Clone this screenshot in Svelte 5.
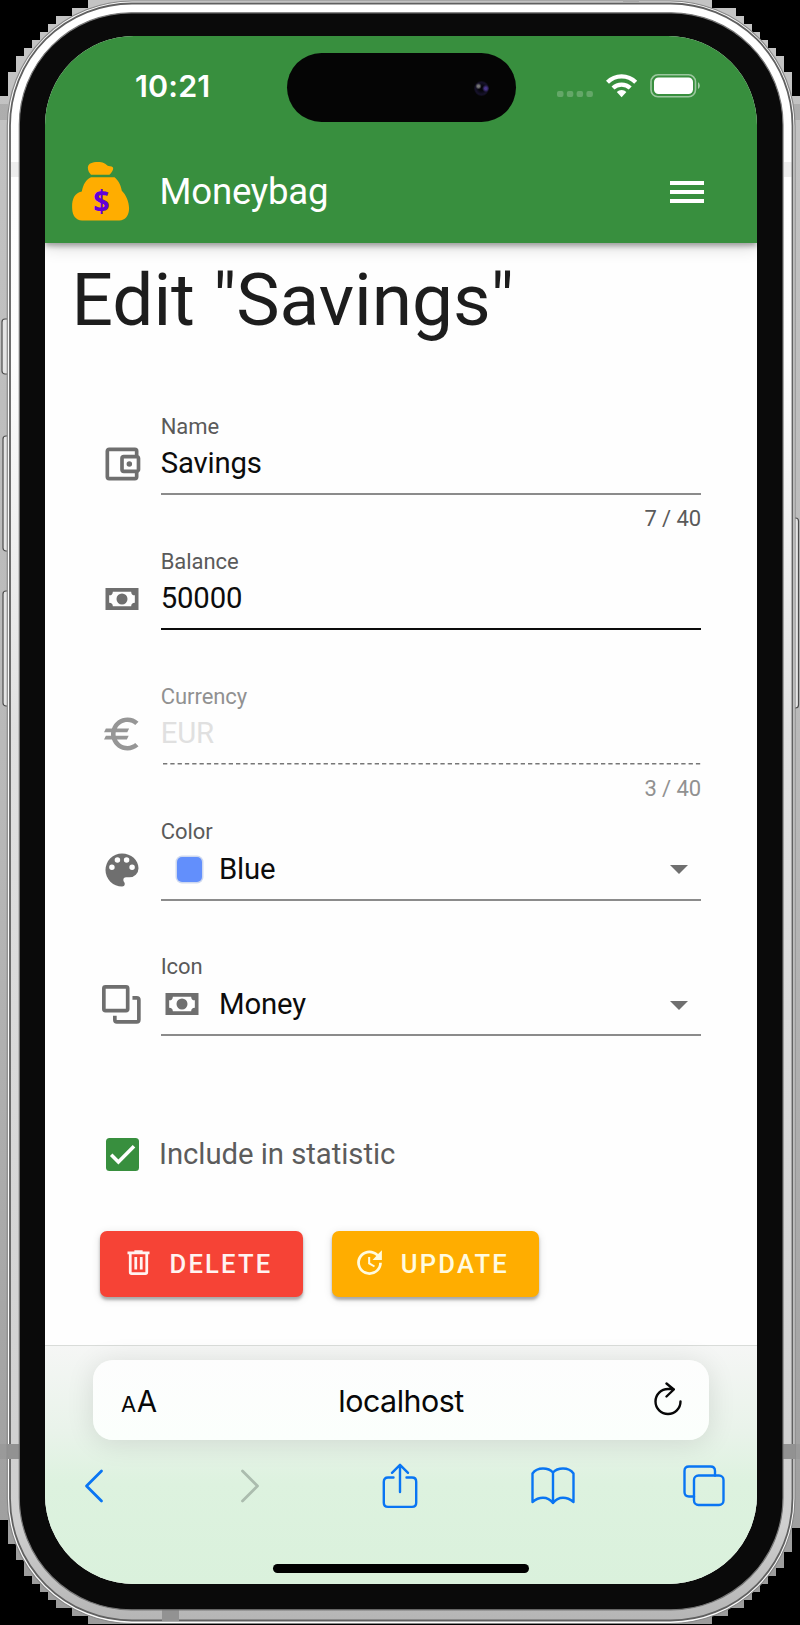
<script>
  const cash = 'M3,6H21V18H3V6M12,9A3,3 0 0,1 15,12A3,3 0 0,1 12,15A3,3 0 0,1 9,12A3,3 0 0,1 12,9M7,8A2,2 0 0,1 5,10V14A2,2 0 0,1 7,16H17A2,2 0 0,1 19,14V10A2,2 0 0,1 17,8H7Z';
  const fields = [
    { label: 'Name', value: 'Savings', helper: '7 / 40', icon: 'M5,3C3.89,3 3,3.9 3,5V19A2,2 0 0,0 5,21H19A2,2 0 0,0 21,19V16.72C21.59,16.37 22,15.74 22,15V9C22,8.26 21.59,7.63 21,7.28V5A2,2 0 0,0 19,3H5M5,5H19V7H13A2,2 0 0,0 11,9V15A2,2 0 0,0 13,17H19V19H5V5M13,9H20V15H13V9M16,10.5A1.5,1.5 0 0,0 14.5,12A1.5,1.5 0 0,0 16,13.5A1.5,1.5 0 0,0 17.5,12A1.5,1.5 0 0,0 16,10.5Z' },
    { label: 'Balance', value: '50000', state: 'hovered', icon: cash },
    { label: 'Currency', value: 'EUR', helper: '3 / 40', state: 'disabled', icon: 'M15 18.5c-2.51 0-4.68-1.42-5.76-3.5h5.4l1-2H8.58c-.05-.33-.08-.66-.08-1s.03-.67.08-1h6.3l1-2H9.24C10.32 6.92 12.5 5.5 15 5.5c1.61 0 3.09.59 4.23 1.57L21 5.3C19.41 3.87 17.3 3 15 3c-3.92 0-7.24 2.51-8.48 6H3.2l-1 2h3.86c-.04.33-.06.66-.06 1s.02.67.06 1H3.2l-1 2h4.32c1.24 3.49 4.56 6 8.48 6 2.31 0 4.41-.87 6-2.3l-1.78-1.77c-1.13.98-2.6 1.57-4.22 1.57z' },
    { label: 'Color', value: 'Blue', select: 'swatch', icon: 'M17.5,12A1.5,1.5 0 0,1 16,10.5A1.5,1.5 0 0,1 17.5,9A1.5,1.5 0 0,1 19,10.5A1.5,1.5 0 0,1 17.5,12M14.5,8A1.5,1.5 0 0,1 13,6.5A1.5,1.5 0 0,1 14.5,5A1.5,1.5 0 0,1 16,6.5A1.5,1.5 0 0,1 14.5,8M9.5,8A1.5,1.5 0 0,1 8,6.5A1.5,1.5 0 0,1 9.5,5A1.5,1.5 0 0,1 11,6.5A1.5,1.5 0 0,1 9.5,8M6.5,12A1.5,1.5 0 0,1 5,10.5A1.5,1.5 0 0,1 6.5,9A1.5,1.5 0 0,1 8,10.5A1.5,1.5 0 0,1 6.5,12M12,3A9,9 0 0,0 3,12A9,9 0 0,0 12,21A1.5,1.5 0 0,0 13.5,19.5C13.5,19.11 13.35,18.76 13.11,18.5C12.88,18.23 12.73,17.88 12.73,17.5A1.5,1.5 0 0,1 14.23,16H16A5,5 0 0,0 21,11C21,6.58 16.97,3 12,3Z' },
    { label: 'Icon', value: 'Money', select: 'cash' }
  ];
</script>

<div class="stage">
  <svg class="frame" viewBox="0 0 800 1625" aria-hidden="true">
    <defs>
      <linearGradient id="side" x1="0" y1="0" x2="0" y2="1">
        <stop offset="0" stop-color="#c4c4c4" /><stop offset=".5" stop-color="#b8b8b8" /><stop offset="1" stop-color="#9c9c9c" />
      </linearGradient>
      <linearGradient id="metal" x1="0" y1="0" x2="0" y2="1">
        <stop offset="0" stop-color="#fff" /><stop offset=".22" stop-color="#fdfdfd" /><stop offset=".45" stop-color="#e0e0e0" />
        <stop offset=".94" stop-color="#cfcfcf" /><stop offset="1" stop-color="#b5b5b5" />
      </linearGradient>
    </defs>
    <rect width="800" height="1625" fill="#000" />
    <path fill="url(#side)" d="M88 0H712V8H736V16H744V24H752V32H760V40H768V48H776V56H784V72H792V96H800V1528H792V1552H784V1568H776V1576H768V1584H760V1592H752V1600H744V1608H728V1616H712V1624H88V1616H72V1608H56V1600H48V1592H40V1584H32V1576H24V1560H16V1544H8V1520H0V96H8V72H16V56H24V48H32V40H40V32H48V24H56V16H72V8H88Z" />
    <path fill="#8e8e8e" d="M0 104H8V120H0ZM792 104H800V120H792ZM0 1444H8V1459H0ZM792 1444H800V1459H792Z" opacity=".4" />
    <g fill="#e4e4e4" stroke="#4c4c4c" stroke-width="1.2">
      <rect x="2" y="319" width="10" height="55" rx="3" />
      <rect x="3" y="436" width="9" height="115" rx="3" />
      <rect x="3" y="591" width="9" height="115" rx="3" />
      <rect x="791" y="518" width="7.5" height="190" rx="3" />
    </g>
    <rect x="7.3" y="1" width="787.7" height="1622.5" rx="125" fill="#fafafa" stroke="#888" stroke-width="1.2" />
    <rect x="10" y="3.5" width="782.5" height="1617" rx="122" fill="url(#metal)" stroke="#606060" stroke-width="1.8" />
    <path class="seam" fill="#909090" d="M11 162H19V177H11ZM784 162H792V177H784Z" />
    <path fill="#929292" d="M8 1444H20V1459H8ZM783 1444H795V1459H783ZM162 1609H179V1621H162Z" />
    <path fill="#a8a8a8" d="M623 0H639V2H623Z" />
    <rect x="19.3" y="12.8" width="763.7" height="1597" rx="112" fill="#0a0a0a" stroke="#777" stroke-width="1.2" />
  </svg>

  <main class="screen">
    <div class="status">
      <span class="time">10:21</span>
      <div class="island"><i class="lens"></i></div>
      <svg class="signals" width="146" height="26" viewBox="0 0 146 26">
        <g fill="#fff" opacity=".22">
          <rect x="0" y="17" width="6.5" height="6" rx="2" /><rect x="9.8" y="17" width="6.5" height="6" rx="2" />
          <rect x="19.6" y="17" width="6.5" height="6" rx="2" /><rect x="29.4" y="17" width="6.5" height="6" rx="2" />
        </g>
        <g fill="none" stroke="#fff" stroke-width="4.2">
          <path d="M50.5 8.3A19.8 19.8 0 0 1 78.7 8.3" /><path d="M56 14.1A12.2 12.2 0 0 1 73.2 14.1" />
        </g>
        <path fill="#fff" d="M59.8 17.9A6.8 6.8 0 0 1 69.4 17.9L64.6 23.2Z" />
        <rect x="94" y=".8" width="44.5" height="22" rx="7" fill="none" stroke="#fff" stroke-opacity=".5" stroke-width="1.6" />
        <rect x="97" y="3.5" width="39" height="16.5" rx="4.5" fill="#fff" />
        <path fill="#fff" opacity=".55" d="M141 8Q144.8 11.7 141 15.3Z" />
      </svg>
    </div>

    <header>
      <svg class="logo" width="58" height="60" viewBox="0 0 58 60">
        <path fill="#ffad00" d="M19 13.8C16.8 11.5 15.6 8.8 15.9 6C16.5 2.4 20 1.2 26 1.1C31 1.1 33 2.5 35.3 4.6C36.5 5.8 39.6 4.8 40.8 6.2C42 8.2 40 11.4 37.5 13.8ZM19 16.3H42.5C45.5 18.7 48.6 23 49.8 29.7C54.5 34 57.6 42.5 57 49C56.4 55 53 59.4 47.5 59.4H10C3.5 59.4 .4 54 .2 48C-.4 40 1.5 32 9.8 30.5C11.2 23.5 13.8 18.9 19 16.3Z" />
        <text x="21.3" y="51" textLength="16.5" lengthAdjust="spacingAndGlyphs">$</text>
      </svg>
      <strong class="brand">Moneybag</strong>
      <svg class="menu" width="34" height="24" viewBox="0 0 34 24"><path d="M0 3H34M0 12H34M0 21H34" /></svg>
    </header>

    <h1>Edit "Savings"</h1>

    <section class="fields">
      {#each fields as f}
        <div class="field {f.state ?? ''}">
          <svg class="icon" viewBox="0 0 24 24">
            {#if f.icon}
              <path d={f.icon} />
            {:else}
              <g fill="none" stroke="currentColor" stroke-width="2">
                <rect x="2.1" y="2.1" width="13" height="13" rx=".9" />
                <path d="M17.7 8.1H20Q21.2 8.1 21.2 9.2V20Q21.2 21.2 20 21.2H9.2Q8.1 21.2 8.1 20V17.8" />
              </g>
            {/if}
          </svg>
          <div class="control">
            <span class="label">{f.label}</span>
            <div class="value">
              {#if f.select}
                <span class="lead">
                  {#if f.select === 'swatch'}<i class="swatch"></i>{:else}<svg class="icon" viewBox="0 0 24 24"><path d={cash} /></svg>{/if}
                </span>
              {/if}
              <span>{f.value}</span>
              {#if f.select}<svg class="arrow" width="18" height="9" viewBox="0 0 18 9"><path d="M0 0H18L9 9Z" /></svg>{/if}
            </div>
            {#if f.state === 'disabled'}
              <svg class="dashes" width="541" height="2"><path d="M2 .8H541" /></svg>
            {:else}
              <div class="line"></div>
            {/if}
            {#if f.helper}<span class="helper">{f.helper}</span>{/if}
          </div>
        </div>
      {/each}
    </section>

    <div class="check">
      <span class="box"><svg width="33" height="33" viewBox="0 0 33 33"><path d="M5.2 16.8L12.4 24L28 8.3" /></svg></span>
      <span>Include in statistic</span>
    </div>

    <div class="actions">
      <button class="delete">
        <svg viewBox="0 0 24 24"><path d="M9,3V4H4V6H5V19A2,2 0 0,0 7,21H17A2,2 0 0,0 19,19V6H20V4H15V3H9M7,6H17V19H7V6M9,8V17H11V8H9M13,8V17H15V8H13Z" /></svg>
        <span>DELETE</span>
      </button>
      <button class="update">
        <svg viewBox="0 0 24 24"><path d="M21,10.12H14.22L16.96,7.3C14.23,4.6 9.81,4.5 7.08,7.2C4.35,9.91 4.35,14.28 7.08,17C9.81,19.7 14.23,19.7 16.96,17C18.32,15.65 19,14.08 19,12.1H21C21,14.08 20.12,16.65 18.36,18.39C14.85,21.87 9.15,21.87 5.64,18.39C2.14,14.92 2.11,9.28 5.62,5.81C9.13,2.34 14.76,2.34 18.27,5.81L21,3V10.12M12.5,8V12.25L16,14.33L15.28,15.54L11,13V8H12.5Z" /></svg>
        <span>UPDATE</span>
      </button>
    </div>

    <footer>
      <div class="address">
        <span class="aa"><small>A</small>A</span>
        <span class="host">localhost</span>
        <svg width="30" height="36" viewBox="0 0 30 36"><path d="M27.5 19.5A12.5 12.5 0 1 1 15 7H20.5M13.5 1.5L20.8 7.5L13.5 14.5" /></svg>
      </div>
      <nav>
        <svg width="20" height="34" viewBox="0 0 20 34"><path d="M17.5 2L2.5 17L17.5 32" stroke-width="2.8" /></svg>
        <svg class="off" width="20" height="34" viewBox="0 0 20 34"><path d="M2.5 2L17.5 17L2.5 32" stroke-width="2.8" /></svg>
        <svg width="36" height="46" viewBox="0 0 36 46"><path d="M11.5 14.5H6Q1.8 14.5 1.8 18.7V39.7Q1.8 43.9 6 43.9H30Q34.2 43.9 34.2 39.7V18.7Q34.2 14.5 30 14.5H24.5M18 29V2M10 9.8L18 1.8L26 9.8" /></svg>
        <svg width="44" height="40" viewBox="0 0 44 40"><path d="M22 6.5Q18.5 2.5 12 2.5Q5 2.5 1.5 7.5V36Q6.5 31.8 12 31.8Q18 31.8 22 37Q26 31.8 32 31.8Q37.5 31.8 42.5 36V7.5Q39 2.5 32 2.5Q25.5 2.5 22 6.5V37" /></svg>
        <svg width="42" height="42" viewBox="0 0 42 42"><path d="M11 31.5H6Q1.5 31.5 1.5 27V6Q1.5 1.5 6 1.5H27.5Q32 1.5 32 6V10.5" /><rect x="11" y="10.5" width="29.5" height="29.5" rx="4.5" /></svg>
      </nav>
      <div class="home"></div>
    </footer>
  </main>
</div>

<style>
  :global(body) { margin: 0; background: #000; }
  .stage { position: relative; width: 800px; height: 1625px; overflow: hidden; font-family: Roboto, sans-serif; }
  .frame { position: absolute; inset: 0; width: 800px; height: 1625px; }
  .seam { opacity: .15; }
  .screen { position: relative; box-sizing: border-box; width: 712px; height: 1548px; margin: 36px 0 0 45px; border-radius: 89px; overflow: hidden; background: #fefefe; display: flex; flex-direction: column; }
  .status { position: relative; z-index: 1; flex: none; box-sizing: border-box; height: 106px; padding-top: 16.5px; background: #388f3e; display: grid; grid-template-columns: 241.5px 229px 1fr; align-items: start; }
  .time { font: 600 30.5px/36px Inter, sans-serif; color: #fff; padding: 15px 0 0 90px; letter-spacing: .15px; }
  .island { height: 69px; border-radius: 35px; background: #050505; display: flex; justify-content: flex-end; align-items: center; }
  .lens { width: 15px; height: 15px; border-radius: 50%; margin: 2px 27px 0 0; background: radial-gradient(circle at 30% 35%, #777 0 7%, transparent 22%), radial-gradient(circle at 78% 50%, #49368c 0 8%, transparent 26%), radial-gradient(circle, #05050a 20%, #16122a 55%, #09080d 80%); }
  .signals { margin: 21.5px 0 0 41.5px; }
  header { flex: none; height: 100.5px; background: #388f3e; display: flex; align-items: center; box-shadow: 0 3px 5px rgba(0,0,0,.3), 0 4px 16px rgba(0,0,0,.16); color: #fff; }
  .logo { margin: -2px 0 0 27px; }
  .logo text { font: 700 31px "Noto Sans", sans-serif; fill: #6200d8; }
  .brand { margin-left: 29.5px; font-weight: 400; font-size: 36.6px; line-height: 48px; letter-spacing: -.2px; }
  .menu { margin: -1px 53px 0 auto; fill: none; stroke: #fff; stroke-width: 4; }
  h1 { flex: none; margin: 13.5px 0 0 26.5px; font-weight: 400; font-size: 73px; line-height: 88px; letter-spacing: -.05px; color: #1d1d1d; }
  .fields { margin-top: 48.5px; }
  .field { height: 135.2px; display: flex; color: #6f6f6f; }
  .icon { width: 44px; height: 44px; fill: currentColor; flex: none; display: block; }
  .field > .icon { margin: 49.5px 16.5px 0 55.2px; }
  .control { width: 540.5px; display: flex; flex-direction: column; padding-top: 21px; }
  .label, .helper { font-size: 22px; line-height: 26px; letter-spacing: -.05px; color: #5a5a5a; flex: none; }
  .value { margin-top: 5.5px; height: 36px; flex: none; display: flex; align-items: center; font-size: 29.3px; line-height: 36px; letter-spacing: -.15px; color: #0c0c0c; }
  .line { margin-top: 12.2px; height: 2px; flex: none; background: #8b8b8b; }
  .hovered .line { background: #0c0c0c; }
  .dashes { margin-top: 12px; flex: none; }
  .dashes path { stroke: #777; stroke-width: 1.5; stroke-dasharray: 4.3 3; }
  .helper { align-self: flex-end; margin-top: 10.8px; }
  .disabled { color: #969696; }
  .disabled .label, .disabled .helper { color: #919191; }
  .disabled .value { color: #e0e0e0; }
  .lead { width: 58.3px; height: 44px; flex: none; color: #6f6f6f; }
  .lead .icon { margin: .3px 0 0 -.3px; }
  .swatch { display: block; width: 25px; height: 25px; margin: 10.3px 0 0 16.8px; border-radius: 5px; background: #628ffc; box-shadow: 0 0 0 1.5px #cfd9ef; }
  .arrow { margin: 2.5px 13.3px 0 auto; fill: #6f6f6f; }
  .check { margin: 68px 0 0 61px; display: flex; align-items: center; height: 36px; font-size: 29.3px; letter-spacing: -.04px; color: #5c5c5c; }
  .box { width: 33px; height: 33px; margin-right: 20px; border-radius: 3.5px; background: #388f3e; }
  .box svg { display: block; fill: none; stroke: #fff; stroke-width: 3.6; }
  .actions { margin: 58.5px 0 0 55.4px; display: flex; gap: 29px; }
  button { box-sizing: border-box; height: 66px; border: 0; border-radius: 7px; padding: 0 0 0 21.5px; display: flex; align-items: center; font: 500 25.6px/48px Roboto, sans-serif; letter-spacing: 2.2px; color: #fff; box-shadow: 0 3px 3px rgba(0,0,0,.28), 0 2px 9px rgba(0,0,0,.13); }
  button svg { width: 33px; height: 33px; margin: -2px 14.6px 0 0; fill: currentColor; }
  .delete { width: 202.3px; background: #f64336; color: #fff3f1; }
  .update { width: 207.3px; background: #ffad00; color: #fffbe0; }
  footer { flex: none; box-sizing: border-box; height: 239px; margin-top: auto; border-top: 1.5px solid #d9dcd9; padding: 13.5px 48px 0; background: linear-gradient(#f5f6f5, #e9f3ea 36%, #ddf2df 58%, #daf1dc); }
  .address { height: 80px; border-radius: 20px; background: linear-gradient(#fdfdfd, #fbfffc); box-shadow: 0 3px 28px rgba(0,0,0,.11); box-sizing: border-box; padding: 2px 26px 0 28px; display: grid; grid-template-columns: 1fr auto 1fr; align-items: center; color: #080808; font-family: Inter, sans-serif; }
  .address svg { justify-self: end; fill: none; stroke: #080808; stroke-width: 2.4; stroke-linecap: round; stroke-linejoin: round; margin-top: -2px; }
  .aa { font-size: 29.5px; line-height: 36px; padding-top: 3px; }
  .aa small { font-size: 22px; margin-right: .5px; }
  .host { font-size: 30.4px; letter-spacing: -.5px; margin: 0 1px 0 -1px; }
  nav { display: grid; grid-template-columns: 156px 142px 148.5px 152.5px 42px; align-items: center; margin: 23.3px -16.5px 0 -9px; height: 46px; }
  nav svg { fill: none; stroke: #0975f3; stroke-width: 2.4; stroke-linecap: round; stroke-linejoin: round; display: block; }
  nav .off { stroke: #abbcae; }
  .home { width: 256px; height: 9.5px; border-radius: 5px; background: #000; margin: 55px auto 0; }
</style>
